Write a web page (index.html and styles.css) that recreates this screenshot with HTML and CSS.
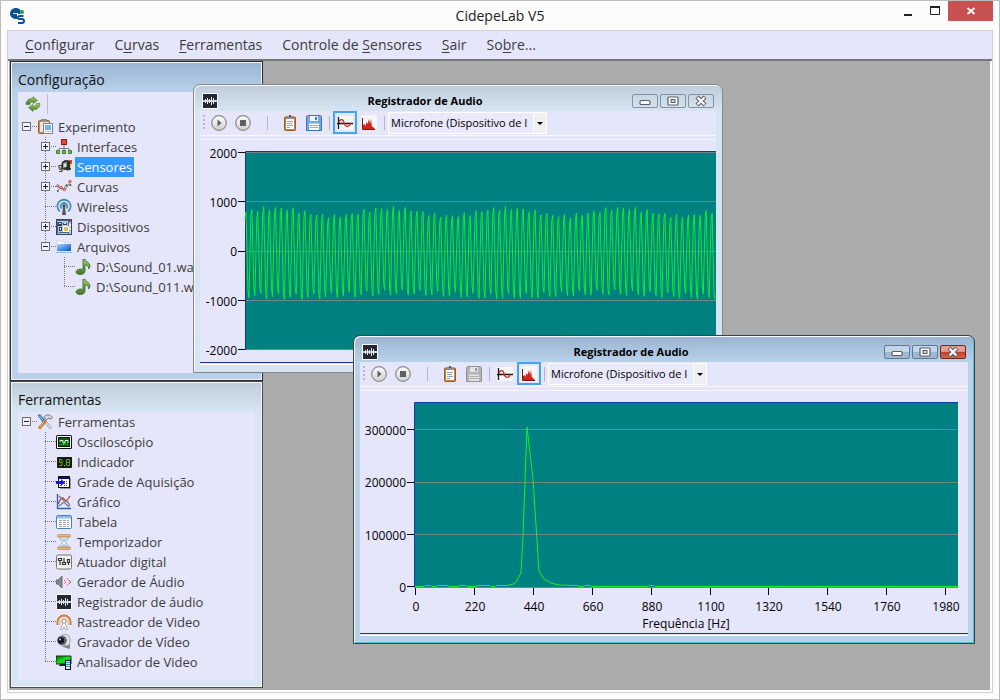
FILE: index.html
```html
<!DOCTYPE html>
<html lang="pt-BR">
<head>
<meta charset="utf-8">
<title>CidepeLab V5</title>
<link rel="stylesheet" href="styles.css">
</head>
<body>
<svg class="defs" aria-hidden="true">
  <defs>
    <linearGradient id="gRound" x2="0" y2="1"><stop stop-color="#fff"/><stop offset="1" stop-color="#cfcfcf"/></linearGradient>
    <linearGradient id="gGreen" x2="0" y2="1"><stop stop-color="#a5cf6c"/><stop offset="1" stop-color="#3c7a22"/></linearGradient>
    <linearGradient id="gBlue" x2="1" y2="1"><stop stop-color="#a9d4ff"/><stop offset="1" stop-color="#0a50c8"/></linearGradient>
    <linearGradient id="gScreen" x2="1" y2="1"><stop stop-color="#0a5a0a"/><stop offset=".5" stop-color="#19e219"/><stop offset="1" stop-color="#0a8a0a"/></linearGradient>
  </defs>

  <symbol id="t-tee" viewBox="0 0 19 20"><path d="M8.500 0V20M8 9.500H19" class="dots"/></symbol>
  <symbol id="t-end" viewBox="0 0 19 20"><path d="M8.500 0V10M8 9.500H19" class="dots"/></symbol>
  <symbol id="t-plus" viewBox="0 0 19 20"><path d="M8.500 0V20M8 9.500H19" class="dots"/><rect x="4.500" y="5.500" width="8" height="8" class="exp"/><path d="M6 9.500h5M8.500 7v5" stroke="#222"/></symbol>
  <symbol id="t-minus" viewBox="0 0 19 20"><path d="M8 9.500H19" class="dots"/><rect x="4.500" y="5.500" width="8" height="8" class="exp"/><path d="M6 9.500h5" stroke="#222"/></symbol>
  <symbol id="t-minus-end" viewBox="0 0 19 20"><path d="M8.500 0V10M8 9.500H19" class="dots"/><rect x="4.500" y="5.500" width="8" height="8" class="exp"/><path d="M6 9.500h5" stroke="#222"/></symbol>

  <symbol id="i-logo" viewBox="0 0 16 16"><path d="M0 5.500C0 2.500 2.500 0 6 0c2.500 0 4 1 4.500 2.500V6H7v5C3 11 0 9 0 5.500z" fill="#0b4f92"/><path d="M3 5h5v1H3z" fill="#dfe9f3"/><circle cx="12" cy="4" r="2" fill="#1fa34a"/><path d="M13.500 8H9.500a1.400 1.400 0 0 0 0 3H12a1.800 1.800 0 0 1 0 4H8" fill="none" stroke="#0b4f92" stroke-width="2"/></symbol>
  <symbol id="i-refresh" viewBox="0 0 16 16"><path d="M1 8.500C1 4.500 4 2 8 2.500V.5l4.500 4L8 7.500V5.700C6 5.500 4.800 6.500 4.800 8.500z" fill="url(#gGreen)" stroke="#47782c" stroke-width=".6"/><path d="M15 7.500c0 4-3 6.500-7 6v2l-4.500-4L8 8.500v1.800c2 .2 3.200-.8 3.200-2.800z" fill="url(#gGreen)" stroke="#47782c" stroke-width=".6"/></symbol>
  <symbol id="i-experiment" viewBox="0 0 16 16"><rect x="1.500" y="1.500" width="11" height="13" rx="1" fill="#c98a4b" stroke="#9a5d27"/><path d="M4 0h6v3H4z" fill="#8c8f94"/><rect x="3" y="3" width="9" height="10" fill="#f0e6d8"/><rect x="6.500" y="4.500" width="9" height="10" fill="#fff" stroke="#4b8fc9"/><path d="M8 6h6v5H8z" fill="#6fb2e6"/><path d="M8 12.500h6" stroke="#9cc8ec"/></symbol>
  <symbol id="i-interfaces" viewBox="0 0 16 16"><path d="M8 6v4M3 12V9.500h10V12M8 9v3" fill="none" stroke="#7b7b80"/><rect x="5.500" y=".5" width="5" height="5" fill="#e84a35" stroke="#98190f"/><path d="M.5 11.500h3v3h-3zM6.500 11.500h3v3h-3zM12.500 11.500h3v3h-3z" fill="#7fc657" stroke="#3c7a22"/></symbol>
  <symbol id="i-sensors" viewBox="0 0 16 16"><path d="M6 3l3-2 5 .5 1 1v8l-3 1-5-1-2-3z" fill="#2f322b"/><path d="M7 4l4-1v5l-4 1z" fill="#98a08f"/><path d="M8 5l2-.5v3L8 8z" fill="#dde3d8"/><path d="M14 1h2v4h-2z" fill="#e23c1c"/><path d="M14 5h1v4h-1z" fill="#f1cc24"/><path d="M6 6.500H3v2.500h3v3.500H3M7 10l-4 .5" fill="none" stroke="#4a4b3a" stroke-width="1.200"/></symbol>
  <symbol id="i-curves" viewBox="0 0 16 16"><path d="M1 12l4-4 4 3 5-8M1 7l6 4 3-5 5 0" fill="none" stroke="#8a8d95"/><g fill="#f2b5b0" stroke="#b3342a" stroke-width=".8"><circle cx="1.800" cy="7" r="1.200"/><circle cx="5" cy="8.500" r="1.200"/><circle cx="8.500" cy="10.500" r="1.200"/><circle cx="14" cy="2.500" r="1.200"/></g><g fill="#555"><circle cx="1.800" cy="12" r="1"/><circle cx="10.500" cy="6.500" r="1"/><circle cx="14.500" cy="6" r="1"/></g></symbol>
  <symbol id="i-wireless" viewBox="0 0 16 16"><path d="M4 12.500A6.600 6.600 0 1 1 12 12.500M5.500 9.500a3.300 3.300 0 1 1 5 0" fill="none" stroke="#2f82b5" stroke-width="1.500"/><circle cx="8" cy="7" r="1.700" fill="#444a52"/><path d="M7 8h2l1 8H6z" fill="#50565e"/></symbol>
  <symbol id="i-devices" viewBox="0 0 16 16"><rect x=".5" y=".5" width="15" height="15" fill="#b4c8e0" stroke="#304a6c"/><path d="M1 1h11v1H1zM12 1h1v14h-1zM1 3h1v12H1zM3 13h9v1H3z" fill="#45638c"/><path d="M2 3h4v4H2zM7 4h4v2H7zM3 8h3v4H3z" fill="#39434f"/><path d="M3 4h2v1H3zM8 4h2v1H8zM4 9h1v2H4z" fill="#dbe4ee"/><rect x="7.500" y="7.500" width="5" height="5" fill="#e7bd51" stroke="#fff"/><path d="M13 1h2v2h-2z" fill="#de3434"/><path d="M13 5h2v2h-2zM13 9h2v1h-2z" fill="#fff"/></symbol>
  <symbol id="i-files" viewBox="0 0 16 16"><path d="M1 2h6l1 2h7v3H1z" fill="#fff" stroke="#b9c6d8" stroke-width=".6"/><path d="M1 5h14v7H1z" fill="url(#gBlue)"/><path d="M0 13h16v1H0z" fill="#9db4d1"/></symbol>
  <symbol id="i-note" viewBox="0 0 16 16"><path d="M8 0h2c0 3 5 3 5 7 0 1-.5 2-1.500 3 .5-3-1.500-4-3.500-4v6c0 2-2 3.500-4.500 3.500S1 14.500 1 13s2-3 4.500-3c1 0 2 .2 2.500.5z" fill="url(#gGreen)" stroke="#35651f" stroke-width=".8"/></symbol>
  <symbol id="i-tools" viewBox="0 0 16 16"><path d="M6 5l8 9.500" stroke="#7d8691" stroke-width="2.600"/><path d="M6 5l8 9.500" stroke="#e8edf2" stroke-width="1.200"/><path d="M1 1.500l2-1 5 6-2 2z" fill="#2f77c5" stroke="#1f5a9c" stroke-width=".5"/><path d="M2.500 2l4 5" stroke="#9cc8f4"/><path d="M9 6.500L2 14.500" stroke="#c27d31" stroke-width="3"/><path d="M7 8L3 13" stroke="#efbf7b"/><path d="M7 3c2-3 6-3 8.500.5l-1.500 2-2-1.500-2.500 2z" fill="#d5d9df" stroke="#5d646d" stroke-width=".8"/></symbol>
  <symbol id="i-scope" viewBox="0 0 16 16"><rect x="0" y="1" width="16" height="14" rx="1.500" fill="#111"/><rect x="1.500" y="2.500" width="13" height="11" fill="none" stroke="#fff"/><rect x="2.500" y="3.500" width="11" height="9" fill="#08620d" stroke="#111"/><path d="M4 8V6.500h3V9h2V6.500h3V9" fill="none" stroke="#d7ffd7"/><path d="M3 10.500h10" stroke="#2cd238" stroke-dasharray="1 1"/></symbol>
  <symbol id="i-indicator" viewBox="0 0 16 16"><rect x="1" y="3" width="15" height="11" rx="1" fill="#161914"/><path d="M3 5.500h3v6H3M6 8.500H3.500V5.500M10.500 5.500h3v6h-3zM10.500 8.500h3" fill="none" stroke="#55a51c"/><path d="M8 11h1v1H8z" fill="#83e033"/></symbol>
  <symbol id="i-grid" viewBox="0 0 16 16"><path d="M4 4h11v11H4z" fill="#9a9aa0"/><rect x="2.500" y="2.500" width="11" height="11" fill="#fff" stroke="#111"/><path d="M3 3h10v2H3z" fill="#0a0a8c"/><path d="M8 7.500h4M8 9.500h4M8 11.500h4M4 11.500h2" stroke="#333" stroke-dasharray="1 1"/><path d="M0 7h5V5l4 3.500L5 12v-2H0z" fill="#1414e6"/></symbol>
  <symbol id="i-graph" viewBox="0 0 16 16"><path d="M1.500 0v14.500H15" fill="none" stroke="#2b62b4" stroke-width="1.400"/><path d="M2 10c2-4 4-8 6-5s2 3 6-3" fill="none" stroke="#bd2e24" stroke-width="1.200"/><path d="M3 2l4 4 5 2 2 4M3 12l5-4 5 5" fill="none" stroke="#6d7884" stroke-width="1.200"/></symbol>
  <symbol id="i-table" viewBox="0 0 16 16"><rect x=".5" y="1.500" width="15" height="13" rx="1" fill="#fff" stroke="#4a7db6"/><path d="M1 2h14v2.500H1z" fill="#8fbdec"/><path d="M3 6.500h10M3 8.500h10M3 10.500h10M3 12.500h10" stroke="#9ba4b0" stroke-dasharray="3 1"/></symbol>
  <symbol id="i-hourglass" viewBox="0 0 16 16"><path d="M4 3c0 3 2.500 4 2.500 5.500S3 11 3 14h10c0-3-3.500-4-3.500-5.500S12 6 12 3z" fill="#e6f0f8" stroke="#8e9daa" stroke-width=".8"/><path d="M5 5h6L8 8zM4.500 13c1-2 2.500-2.500 3.500-2.500s2.500.5 3.500 2.500z" fill="#a5c8e4"/><rect x="1.500" y=".7" width="13" height="2.200" rx="1" fill="#f1c089" stroke="#b3712f" stroke-width=".7"/><rect x="1.500" y="13.200" width="13" height="2.200" rx="1" fill="#f1c089" stroke="#b3712f" stroke-width=".7"/></symbol>
  <symbol id="i-digital" viewBox="0 0 16 16"><rect x=".5" y="1" width="15" height="14" rx="1.500" fill="#f1f1ee" stroke="#77777a"/><path d="M2.500 4.500h3v2h-3zM6.500 8.500h3v2h-3zM11.500 5.500h2v3h-2zM4 7v4M8 4v4M12.500 9v2" fill="none" stroke="#333" stroke-width="1.200"/></symbol>
  <symbol id="i-speaker" viewBox="0 0 16 16"><path d="M0 6h2l4-4v12l-4-4H0z" fill="#85888c" stroke="#55585c" stroke-width=".8"/><path d="M8 6l2 2-2 2M10.500 4l4 4-4 4M13 6l2 2-2 2" fill="none" stroke="#e0524c" stroke-dasharray="2 .6"/></symbol>
  <symbol id="i-wave" viewBox="0 0 16 16"><rect x=".5" y=".5" width="15" height="15" fill="#222835" stroke="#fff"/><path d="M1 8h14" stroke="#fff" stroke-width="1.500"/><path d="M3.500 6v4M5.500 5v6M7.500 6v4M9.500 4v8M11.500 5v6M13.500 7v2" stroke="#e6ebf2"/></symbol>
  <symbol id="i-track" viewBox="0 0 16 16"><path d="M1.500 11V8a6.500 6.500 0 0 1 13 0v3" fill="none" stroke="#cf7f35" stroke-width="2"/><path d="M4 11V8.500a4 4 0 0 1 8 0V11" fill="none" stroke="#efc596" stroke-width="1.500"/><circle cx="8" cy="7.500" r="2" fill="#fff" stroke="#999"/><path d="M7 9h2l2.500 6.500h-2L8 13l-1.500 2.500h-2z" fill="#fff" stroke="#98989b" stroke-width=".8"/></symbol>
  <symbol id="i-webcam" viewBox="0 0 16 16"><path d="M6 1c5-2 8 1 8 5s-1 6-5 6z" fill="#dfe3e6" stroke="#8d9398" stroke-width=".8"/><circle cx="6" cy="6.500" r="4.800" fill="#64696e"/><circle cx="5" cy="6.500" r="3.200" fill="#15171a"/><circle cx="4" cy="5.500" r="1" fill="#b9c6d2"/><path d="M4 11.500l6 .5 4-2v5l-4-1z" fill="#80888f"/></symbol>
  <symbol id="i-video" viewBox="0 0 16 16"><path d="M0 2h15v8H0z" fill="url(#gScreen)" stroke="#0b3b0b"/><path d="M4 10h5v2H3z" fill="#222"/><rect x="9.500" y="6.500" width="5" height="9" fill="#dcecf8" stroke="#111"/><path d="M10 8.500h4M10 10.500h4M10 12.500h4" stroke="#3684c4"/></symbol>

  <symbol id="i-play" viewBox="0 0 18 18"><circle cx="9" cy="9" r="7.300" fill="url(#gRound)" stroke="#8d8d8d" stroke-width="1.200"/><path d="M7.500 5.500l4 3.500-4 3.500z" fill="#5f5f5f"/></symbol>
  <symbol id="i-stop" viewBox="0 0 18 18"><circle cx="9" cy="9" r="7.300" fill="url(#gRound)" stroke="#8d8d8d" stroke-width="1.200"/><path d="M6 6h6v6H6z" fill="#5f5f5f"/></symbol>
  <symbol id="i-clip" viewBox="0 0 16 16"><rect x="2.500" y="2" width="11" height="13.500" rx="1" fill="#c98340" stroke="#9a5a20"/><path d="M4 4h8v10H4z" fill="#fff"/><path d="M5 1h6v3H5z" fill="#8b8f94"/><path d="M7 0h2v2H7z" fill="#55585c"/><path d="M5 6.500h6M5 8.500h5M5 10.500h6M5 12.500h3" stroke="#8fa6bb"/></symbol>
  <symbol id="i-save" viewBox="0 0 16 16"><path d="M.5 1.500l1-1h13l1 1v14H.5z" fill="#6fa9e4" stroke="#3f73b4"/><path d="M4 1h8v5H4z" fill="#eef5fd"/><path d="M9 2h2v3H9z" fill="#3f7ec6"/><path d="M3 8.500h10V15H3z" fill="#fff"/><path d="M3.500 10.500h9M3.500 12.500h9" stroke="#8fc070"/></symbol>
  <symbol id="i-save-off" viewBox="0 0 16 16"><path d="M.5 1.500l1-1h13l1 1v14H.5z" fill="#b4b4b8" stroke="#919196"/><path d="M4 1h8v5H4z" fill="#e4e4e6"/><path d="M9 2h2v3H9z" fill="#99999c"/><path d="M3 8.500h10V15H3z" fill="#e2e2e4"/><path d="M3.500 10.500h9M3.500 12.500h9" stroke="#adadb0"/></symbol>
  <symbol id="i-sine" viewBox="0 0 16 16"><path d="M0 1h16v14H0z" fill="#f6f6f8"/><path d="M1.500 2v12M0 8.500h16" stroke="#161616" stroke-width="1.300"/><path d="M2 8c0-4 4-5 5-.5s5 5.500 6.500.5" fill="none" stroke="#d22a2a" stroke-width="1.200"/></symbol>
  <symbol id="i-spectrum" viewBox="0 0 16 16"><path d="M0 0h16v16H0z" fill="#f6f6f8"/><path d="M2 14v-4l1.500-1 1 2 1-4 1 2L8 4l1 5 1-5 .8 7 1.200 1 2 2z" fill="#d8231b"/><path d="M1.500 3v11.500H14" fill="none" stroke="#7a1612"/></symbol>
  <symbol id="w-min" viewBox="0 0 14 12"><rect x="2" y="5.500" width="10" height="4" rx="1" fill="#fff" stroke="#5b6068" stroke-width="1.200"/></symbol>
  <symbol id="w-max" viewBox="0 0 14 12"><rect x="2" y="2" width="10" height="8" rx="1" fill="#fff" stroke="#5b6068" stroke-width="1.200"/><rect x="5" y="4.500" width="4" height="3" fill="#c5d2e0" stroke="#5b6068"/></symbol>
  <symbol id="w-close" viewBox="0 0 14 12"><path d="M3 2l8 8M11 2l-8 8" stroke="#565b63" stroke-width="4.200"/><path d="M3.500 2.500l7 7M10.500 2.500l-7 7" stroke="#fff" stroke-width="2.200"/></symbol>
</svg>

<div class="app">
  <header class="titlebar">
    <svg class="logo" width="16" height="16"><use href="#i-logo"/></svg>
    <h1 class="app-title">CidepeLab V5</h1>
    <div class="app-controls">
      <button class="app-btn" aria-label="Minimizar"><svg width="12" height="12"><path d="M2 9h8v2H2z" fill="#222"/></svg></button>
      <button class="app-btn" aria-label="Maximizar"><svg width="12" height="12"><path d="M1.500 1v8.500h9V1" fill="none" stroke="#222"/><path d="M1 1h10v2H1z" fill="#222"/></svg></button>
      <button class="app-btn app-close" aria-label="Fechar"><svg width="12" height="12"><path d="M2.500 3l7 6M9.500 3l-7 6" stroke="#fff" stroke-width="1.800"/></svg></button>
    </div>
  </header>

  <div class="frame">
    <nav class="menu">
      <a href="#"><u>C</u>onfigurar</a>
      <a href="#">C<u>u</u>rvas</a>
      <a href="#"><u>F</u>erramentas</a>
      <a href="#">Controle de <u>S</u>ensores</a>
      <a href="#"><u>S</u>air</a>
      <a href="#">So<u>b</u>re...</a>
    </nav>

    <main class="desktop">
      <div class="docks">
        <section class="dock dock-active">
          <h2 class="dock-title">Configuração</h2>
          <div class="dock-body">
            <div class="dock-tools"><button class="refresh" aria-label="Atualizar"><svg width="16" height="16"><use href="#i-refresh"/></svg></button></div>
            <ul class="tree">
              <li class="row"><svg class="g"><use href="#t-minus"/></svg><svg class="ic"><use href="#i-experiment"/></svg><span>Experimento</span></li>
              <li class="row lv1"><svg class="g"><use href="#t-plus"/></svg><svg class="ic"><use href="#i-interfaces"/></svg><span>Interfaces</span></li>
              <li class="row lv1"><svg class="g"><use href="#t-plus"/></svg><svg class="ic"><use href="#i-sensors"/></svg><span class="selected">Sensores</span></li>
              <li class="row lv1"><svg class="g"><use href="#t-plus"/></svg><svg class="ic"><use href="#i-curves"/></svg><span>Curvas</span></li>
              <li class="row lv1"><svg class="g"><use href="#t-tee"/></svg><svg class="ic"><use href="#i-wireless"/></svg><span>Wireless</span></li>
              <li class="row lv1"><svg class="g"><use href="#t-plus"/></svg><svg class="ic"><use href="#i-devices"/></svg><span>Dispositivos</span></li>
              <li class="row lv1"><svg class="g"><use href="#t-minus-end"/></svg><svg class="ic"><use href="#i-files"/></svg><span>Arquivos</span></li>
              <li class="row lv2"><svg class="g"><use href="#t-tee"/></svg><svg class="ic"><use href="#i-note"/></svg><span>D:\Sound_01.wav</span></li>
              <li class="row lv2"><svg class="g"><use href="#t-end"/></svg><svg class="ic"><use href="#i-note"/></svg><span>D:\Sound_011.wav</span></li>
            </ul>
          </div>
        </section>

        <section class="dock">
          <h2 class="dock-title">Ferramentas</h2>
          <div class="dock-body">
            <ul class="tree">
              <li class="row"><svg class="g"><use href="#t-minus"/></svg><svg class="ic"><use href="#i-tools"/></svg><span>Ferramentas</span></li>
              <li class="row lv1"><svg class="g"><use href="#t-tee"/></svg><svg class="ic"><use href="#i-scope"/></svg><span>Osciloscópio</span></li>
              <li class="row lv1"><svg class="g"><use href="#t-tee"/></svg><svg class="ic"><use href="#i-indicator"/></svg><span>Indicador</span></li>
              <li class="row lv1"><svg class="g"><use href="#t-tee"/></svg><svg class="ic"><use href="#i-grid"/></svg><span>Grade de Aquisição</span></li>
              <li class="row lv1"><svg class="g"><use href="#t-tee"/></svg><svg class="ic"><use href="#i-graph"/></svg><span>Gráfico</span></li>
              <li class="row lv1"><svg class="g"><use href="#t-tee"/></svg><svg class="ic"><use href="#i-table"/></svg><span>Tabela</span></li>
              <li class="row lv1"><svg class="g"><use href="#t-tee"/></svg><svg class="ic"><use href="#i-hourglass"/></svg><span>Temporizador</span></li>
              <li class="row lv1"><svg class="g"><use href="#t-tee"/></svg><svg class="ic"><use href="#i-digital"/></svg><span>Atuador digital</span></li>
              <li class="row lv1"><svg class="g"><use href="#t-tee"/></svg><svg class="ic"><use href="#i-speaker"/></svg><span>Gerador de Áudio</span></li>
              <li class="row lv1"><svg class="g"><use href="#t-tee"/></svg><svg class="ic"><use href="#i-wave"/></svg><span>Registrador de áudio</span></li>
              <li class="row lv1"><svg class="g"><use href="#t-tee"/></svg><svg class="ic"><use href="#i-track"/></svg><span>Rastreador de Video</span></li>
              <li class="row lv1"><svg class="g"><use href="#t-tee"/></svg><svg class="ic"><use href="#i-webcam"/></svg><span>Gravador de Vídeo</span></li>
              <li class="row lv1"><svg class="g"><use href="#t-end"/></svg><svg class="ic"><use href="#i-video"/></svg><span>Analisador de Video</span></li>
            </ul>
          </div>
        </section>
      </div>

      <section class="win win-wave">
        <header class="win-title">
          <svg width="16" height="16"><use href="#i-wave"/></svg>
          <h2>Registrador de Audio</h2>
          <div class="win-controls">
            <button aria-label="Minimizar"><svg width="14" height="12"><use href="#w-min"/></svg></button>
            <button aria-label="Maximizar"><svg width="14" height="12"><use href="#w-max"/></svg></button>
            <button class="close" aria-label="Fechar"><svg width="14" height="12"><use href="#w-close"/></svg></button>
          </div>
        </header>
        <div class="client">
          <div class="toolbar">
            <i class="grip"></i>
            <button class="tb" aria-label="Reproduzir"><svg width="18" height="18"><use href="#i-play"/></svg></button>
            <button class="tb" aria-label="Parar"><svg width="18" height="18"><use href="#i-stop"/></svg></button>
            <i class="sep sep-wide"></i>
            <button class="tb" aria-label="Copiar"><svg width="16" height="16"><use href="#i-clip"/></svg></button>
            <button class="tb" aria-label="Salvar"><svg width="16" height="16"><use href="#i-save"/></svg></button>
            <i class="sep"></i>
            <button class="tb on" aria-label="Onda" aria-pressed="true"><svg width="16" height="16"><use href="#i-sine"/></svg></button>
            <button class="tb" aria-label="Espectro"><svg width="16" height="16"><use href="#i-spectrum"/></svg></button>
            <i class="sep"></i>
            <span class="combo"><select aria-label="Dispositivo"><option>Microfone (Dispositivo de I</option></select><svg width="6" height="4"><path d="M0 0h6L3 3z"/></svg></span>
          </div>
          <svg class="chart" width="516" height="222" viewBox="0 0 516 222" role="img" aria-label="Forma de onda">
            <rect x="45" y="12" width="471" height="198" fill="#008080"/>
            <path d="M45 12.500H516M45 61.500H516M45 111.500H516M45 160.500H516M45 209.500H516" stroke="#6d8787"/>
            <path d="M45.500 210V11.500H516" fill="none" stroke="#1f2f9c"/>
            <path d="M38 12.500h7M38 61.500h7M38 111.500h7M38 160.500h7M38 209.500h7" stroke="#000"/>
            <g class="labels" text-anchor="end"><text x="37" y="18">2000</text><text x="37" y="67">1000</text><text x="37" y="116">0</text><text x="37" y="166">-1000</text><text x="37" y="215">-2000</text></g>
            <polyline id="wave" fill="none" stroke="#08f02a"/>
          </svg>
        </div>
      </section>

      <section class="win win-spectrum win-active">
        <header class="win-title">
          <svg width="16" height="16"><use href="#i-wave"/></svg>
          <h2>Registrador de Audio</h2>
          <div class="win-controls">
            <button aria-label="Minimizar"><svg width="14" height="12"><use href="#w-min"/></svg></button>
            <button aria-label="Maximizar"><svg width="14" height="12"><use href="#w-max"/></svg></button>
            <button class="close" aria-label="Fechar"><svg width="14" height="12"><use href="#w-close"/></svg></button>
          </div>
        </header>
        <div class="client">
          <div class="toolbar">
            <i class="grip"></i>
            <button class="tb" aria-label="Reproduzir"><svg width="18" height="18"><use href="#i-play"/></svg></button>
            <button class="tb" aria-label="Parar"><svg width="18" height="18"><use href="#i-stop"/></svg></button>
            <i class="sep sep-wide"></i>
            <button class="tb" aria-label="Copiar"><svg width="16" height="16"><use href="#i-clip"/></svg></button>
            <button class="tb" aria-label="Salvar" disabled><svg width="16" height="16"><use href="#i-save-off"/></svg></button>
            <i class="sep"></i>
            <button class="tb" aria-label="Onda"><svg width="16" height="16"><use href="#i-sine"/></svg></button>
            <button class="tb on" aria-label="Espectro" aria-pressed="true"><svg width="16" height="16"><use href="#i-spectrum"/></svg></button>
            <i class="sep"></i>
            <span class="combo"><select aria-label="Dispositivo"><option>Microfone (Dispositivo de I</option></select><svg width="6" height="4"><path d="M0 0h6L3 3z"/></svg></span>
          </div>
          <svg class="chart" width="608" height="242" viewBox="0 0 608 242" role="img" aria-label="Espectro">
            <rect x="54" y="12" width="544" height="184" fill="#008080"/>
            <path d="M54 38.500H598M54 91.500H598M54 143.500H598M54 196.500H598" stroke="#6d8787"/>
            <path d="M54.500 196V11.500H598" fill="none" stroke="#1238b0"/>
            <path d="M47 38.500h7M47 91.500h7M47 143.500h7M47 195.500h7" stroke="#000"/>
            <path d="M55.500 197v7M114.500 197v7M173.500 197v7M232.500 197v7M291.500 197v7M350.500 197v7M408.500 197v7M467.500 197v7M526.500 197v7M585.500 197v7" stroke="#000"/>
            <g class="labels" text-anchor="end"><text x="46" y="44">300000</text><text x="46" y="96">200000</text><text x="46" y="149">100000</text><text x="46" y="201">0</text></g>
            <g class="labels" text-anchor="middle"><text x="56" y="220">0</text><text x="115" y="220">220</text><text x="174" y="220">440</text><text x="233" y="220">660</text><text x="292" y="220">880</text><text x="351" y="220">1100</text><text x="409" y="220">1320</text><text x="468" y="220">1540</text><text x="527" y="220">1760</text><text x="586" y="220">1980</text><text x="326" y="237">Frequência [Hz]</text></g>
            <polyline points="55,195.500 64,195.500 65,194.500 71,194.500 72,195.500 76,195.500 77,194.500 88,194.500 89,195.500 98,195.500 100,194.500 106,194.500 107,195.500 116,195.500 118,194.500 130,194.500 131,195.500 135,195.500 136,194.500 147,194.500 155,192.500 161,182 163,145 167,36 173,88 179,180 184,188 191,192 199,194 217,194.500 219,195.500 223,195.500 225,194.500 230,194.500 231,195.500 288,195.500 289,194.500 294,194.500 295,195.500 598,195.500" fill="none" stroke="#18ee2c"/>
          </svg>
        </div>
      </section>
    </main>
  </div>
</div>
<script src="wave.js"></script>
</body>
</html>
```
FILE: styles.css
```css
* { box-sizing: border-box; }
body { margin: 0; font-family: "Open Sans", "Noto Sans", sans-serif; color: #3c3c3c; }
h1, h2, ul { margin: 0; padding: 0; font-weight: 400; }
ul { list-style: none; }
button { margin: 0; padding: 0; border: 0; background: none; font: inherit; display: flex; align-items: center; justify-content: center; }
svg { display: block; flex: none; }
.defs { position: absolute; width: 0; height: 0; }
.dots { fill: none; stroke: #77777c; stroke-dasharray: 1 1; }
.exp { fill: #f1f1fb; stroke: #707074; }

.app { height: 100vh; display: flex; flex-direction: column; background: #fcfcfc; border: 1px solid #bdbdbd; padding: 0 6px 6px; }
.titlebar { height: 29px; flex: none; display: grid; grid-template-columns: 1fr auto 1fr; align-items: center; }
.logo { margin-left: 3px; }
.app-title { font-size: 14px; color: #222; line-height: 28px; }
.app-controls { display: flex; justify-content: flex-end; align-self: start; }
.app-btn { width: 27px; height: 20px; }
.app-close { width: 45px; background: #c75050; }
.frame { flex: 1; min-height: 0; display: flex; flex-direction: column; border: 1px solid #d2d2d2; }
.menu { height: 30px; flex: none; display: flex; align-items: flex-end; gap: 20px; padding: 0 17px; background: #e6e6fa; border-bottom: 2px solid #77757c; }
.menu a { font-size: 14px; line-height: 28px; color: #3c3c3c; text-decoration: none; }
.menu u { text-underline-offset: 2px; }

.desktop { position: relative; flex: 1; min-height: 0; margin: 0 2px 2px 1px; background: #ababab; overflow: hidden; }
.docks { width: 254px; height: 100%; padding: 0 0 2px 1px; display: flex; flex-direction: column; }
.dock { flex: 306 1 0; min-height: 0; display: flex; flex-direction: column; border: 1px solid #4c4c50; box-shadow: inset 0 0 0 1px #f0f5fa; padding: 1px 7px 7px; background: linear-gradient(#bfcddb, #d7e4f2 30px); }
.dock-active { flex-grow: 320; border: 1px solid #2b2b2f; background: linear-gradient(#99b4d1, #b9d1ea 30px); }
.dock-title { height: 29px; flex: none; padding-top: 7px; font-size: 14px; line-height: 20px; color: #101010; }
.dock-body { flex: 1; min-height: 0; overflow: hidden; background: #e6e6fa; }
.dock-tools { height: 25px; display: flex; padding: 2px 6px; }
.refresh { width: 24px; height: 20px; border-right: 1px solid #bdbdc8; padding-right: 6px; }

.row { height: 20px; display: flex; align-items: center; font-size: 13px; white-space: nowrap; }
.lv1 { padding-left: 19px; }
.lv2 { padding-left: 38px; }
.g { width: 19px; height: 20px; }
.ic { width: 16px; height: 16px; margin-right: 3px; }
.row span { line-height: 20px; padding: 0 2px; }
.row .selected { background: #3399ff; color: #fff; }

.win { position: absolute; border: 1px solid #85898f; border-radius: 7px 7px 0 0; padding: 0 6px 7px; background: linear-gradient(#bfcddb, #d7e4f2 26px); box-shadow: inset 1px 1px 0 #f6fafd; }
.win-wave { left: 184px; top: 23px; }
.win-spectrum { left: 344px; top: 274px; }
.win-active { border-color: #3c4146; background: linear-gradient(#99b4d1, #b9d1ea 26px); box-shadow: inset 1px 1px 0 #f6fafd, inset -1px -1px 0 #50c4d0; }
.win-title { height: 26px; display: flex; align-items: center; padding: 6px 2px 0; }
.win-title h2 { flex: 1; text-align: center; font-size: 11px; font-weight: 700; line-height: 18px; color: #000; }
.win-controls { display: flex; gap: 2px; }
.win-controls button { width: 26px; height: 14px; border: 1px solid #8291a5; border-radius: 2px; }
.win-active .win-controls button { border-color: #66788e; background: linear-gradient(#c3d5e8 50%, #9fb8d2 50%); }
.win-active .win-controls .close { border-color: #6b2b24; background: linear-gradient(#e0a095 45%, #c33e26 50%, #d4664c); }
.client { background: #e6e6fa; border-bottom: 1px solid #fff; }

.toolbar { height: 29px; display: flex; align-items: center; padding-bottom: 5px; border-bottom: 1px solid #f8f8ff; background: linear-gradient(#f8f8ff, #f8f8ff) 0 24px / 100% 1px no-repeat; }
.grip { width: 7px; height: 16px; background: repeating-linear-gradient(#b9b9c6 0 2px, transparent 2px 4px) 3px 0 / 2px 100% no-repeat; }
.tb { width: 24px; height: 23px; flex: none; }
.on { border: 2px solid #4aa3ea; background: #dcebfb; }
.sep { width: 7px; height: 14px; background: linear-gradient(#b4b4c2, #b4b4c2) 3px 0 / 1px 100% no-repeat; }
.sep-wide { width: 23px; background-position-x: 12px; }
.combo { position: relative; display: flex; }
.combo select { appearance: none; width: 159px; height: 22px; padding: 0 16px 0 2px; border: 1px solid #fff; border-radius: 0; background: linear-gradient(90deg, #fff 1px, #f0f0f0 1px) right / 13px 100% no-repeat #e9e9fb; font: 11px "Open Sans", sans-serif; color: #000; }
.combo svg { position: absolute; right: 4px; top: 10px; }
.chart { box-sizing: content-box; border-bottom: 1px solid #1f2f9c; margin-bottom: 1px; }
.labels { font-size: 12px; fill: #000; }
```
FILE: wave.js
```js
// Sampled tone of the recorder: alternating crests and troughs with a slowly varying level.
const points = [];
const period = 5.9;
for (let i = 0; i < 162; i++) {
  const x = 46 + i * period / 2;
  if (x > 516) break;
  const top = 39 + 4 * Math.sin(i * 0.16) + 2 * Math.sin(i * 1.3);
  const bottom = 44 + 2 * Math.sin(i * 0.09) + 3 * Math.sin(i * 2.1);
  const y = i % 2 ? 111 + bottom : 111 - top;
  points.push((x - 1).toFixed(1) + "," + (111 + (y - 111) * 0.85).toFixed(1));
  points.push(x.toFixed(1) + "," + y.toFixed(1));
}
document.getElementById("wave").setAttribute("points", points.join(" "));
```
